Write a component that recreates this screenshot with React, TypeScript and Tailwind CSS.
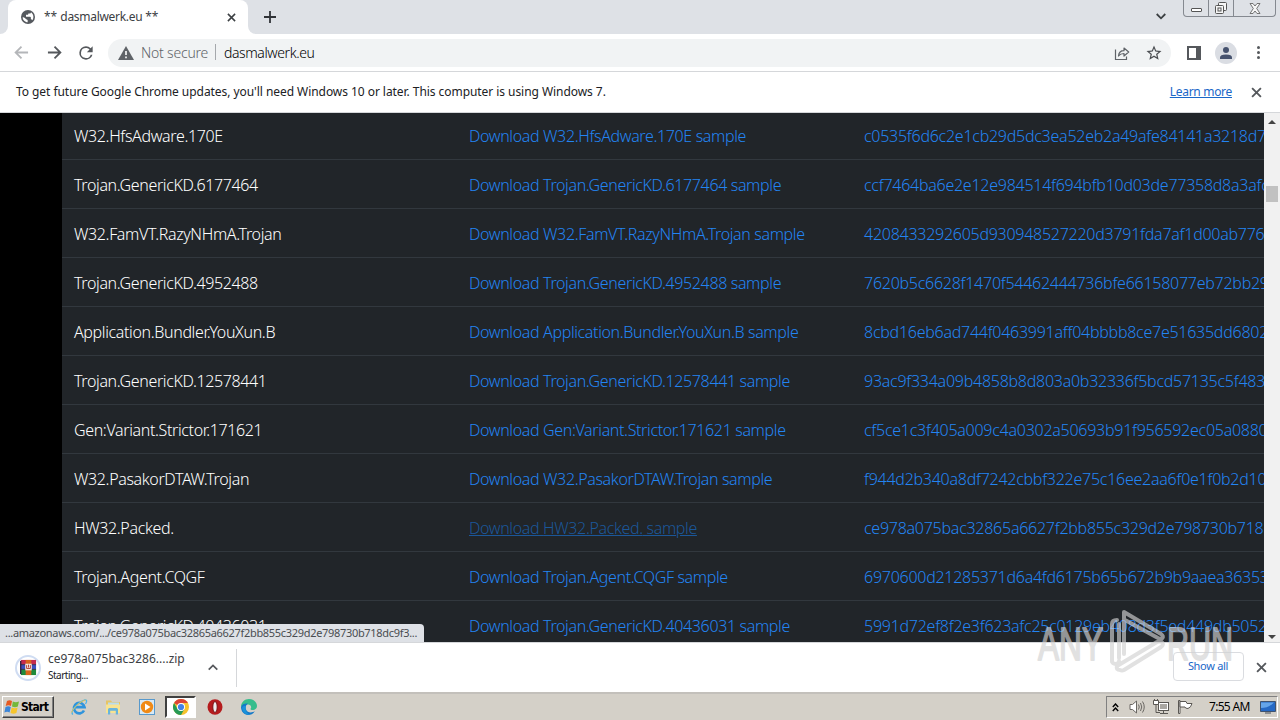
import { ReactNode } from "react";

// ============================================================
// Data
// ============================================================

interface Sample {
  name: string;
  hash: string;
  hovered?: boolean;
}

const SAMPLES: Sample[] = [
  { name: "W32.HfsAdware.170E", hash: "c0535f6d6c2e1cb29d5dc3ea52eb2a49afe84141a3218d7f" },
  { name: "Trojan.GenericKD.6177464", hash: "ccf7464ba6e2e12e984514f694bfb10d03de77358d8a3afc" },
  { name: "W32.FamVT.RazyNHmA.Trojan", hash: "4208433292605d930948527220d3791fda7af1d00ab776" },
  { name: "Trojan.GenericKD.4952488", hash: "7620b5c6628f1470f54462444736bfe66158077eb72bb29" },
  { name: "Application.Bundler.YouXun.B", hash: "8cbd16eb6ad744f0463991aff04bbbb8ce7e51635dd6802" },
  { name: "Trojan.GenericKD.12578441", hash: "93ac9f334a09b4858b8d803a0b32336f5bcd57135c5f483" },
  { name: "Gen:Variant.Strictor.171621", hash: "cf5ce1c3f405a009c4a0302a50693b91f956592ec05a0880" },
  { name: "W32.PasakorDTAW.Trojan", hash: "f944d2b340a8df7242cbbf322e75c16ee2aa6f0e1f0b2d10" },
  { name: "HW32.Packed.", hash: "ce978a075bac32865a6627f2bb855c329d2e798730b718", hovered: true },
  { name: "Trojan.Agent.CQGF", hash: "6970600d21285371d6a4fd6175b65b672b9b9aaea36353" },
  { name: "Trojan.GenericKD.40436031", hash: "5991d72ef8f2e3f623afc25c0129eb408d3f5ed449db5052a" },
];

// ============================================================
// Icons
// ============================================================

function CloseIcon({ className = "" }: { className?: string }) {
  return (
    <svg className={className} viewBox="0 0 10 10" fill="none" stroke="currentColor" strokeWidth={1.7}>
      <path d="M1 1l8 8M9 1L1 9" />
    </svg>
  );
}

function GlobeIcon() {
  return (
    <svg className="h-4 w-4" viewBox="0 0 24 24">
      <circle cx="12" cy="12" r="10.5" fill="#55595e" />
      <path d="M4 12.500c1 0 3 .5 4.500 2 1 1 2.500 1 3 2.200V20C7.500 20 4 16.500 4 12.500zM9 11.500V8.800h2.200c1 0 1.300-1 1.300-2h2c1.200 0 2-.8 2-1.900 2.200 1.500 3.600 4.100 3.600 7.100 0 1.800-.6 3.500-1.500 4.800-.6-.8-1.300-1.300-2.300-1.300v-2.700c0-.8-.6-1.300-1.300-1.300z" fill="#fff" />
    </svg>
  );
}

function ArrowIcon({ className = "" }: { className?: string }) {
  return (
    <svg className={className} viewBox="0 0 16 16" fill="none" stroke="currentColor" strokeWidth={1.9}>
      <path d="M1 8h13M8 1.700L14.300 8 8 14.300" />
    </svg>
  );
}

function ReloadIcon() {
  return (
    <svg className="h-5 w-5" viewBox="0 0 24 24" fill="#55585c">
      <path d="M17.650 6.350A7.960 7.960 0 0 0 12 4a8 8 0 1 0 7.730 10h-2.080A6 6 0 1 1 12 6c1.660 0 3.140.690 4.220 1.780L13 11h7V4l-2.350 2.350z" />
    </svg>
  );
}

function ShareIcon() {
  return (
    <svg className="h-4 w-4" viewBox="0 0 16 16" fill="none" stroke="#5f6368" strokeWidth={1.2}>
      <path d="M1.500 4.500v10h11v-3" />
      <path d="M4.500 11c.3-3.500 2.400-5.300 5.500-5.300V3l4.700 4L10 11V8.500C7.500 8.500 5.800 9.300 4.500 11z" strokeLinejoin="round" />
    </svg>
  );
}

function StarIcon() {
  return (
    <svg className="h-[18px] w-[18px]" viewBox="0 0 24 24" fill="#4a4d51">
      <path d="M22 9.240l-7.190-.620L12 2 9.190 8.630 2 9.240l5.460 4.730L5.820 21 12 17.270 18.180 21l-1.630-7.030L22 9.240zM12 15.400l-3.760 2.270 1-4.280-3.320-2.880 4.380-.380L12 6.100l1.710 4.040 4.380.380-3.320 2.880 1 4.280L12 15.400z" />
    </svg>
  );
}

function WinRarIcon() {
  return (
    <svg className="h-[17px] w-[17px] shrink-0" viewBox="0 0 18 18">
      <rect x="1" y="1" width="16" height="5" fill="#c42a4e" />
      <rect x="1" y="6" width="16" height="5" fill="#3b4fc0" />
      <rect x="1" y="11" width="16" height="6" fill="#1f8a3c" />
      <rect x="0" y="2" width="1.500" height="14" fill="#392447" />
      <rect x="6" y="1" width="6" height="16" fill="#d8641c" />
      <rect x="5.500" y="5" width="7" height="7" fill="#f3e6e0" />
      <path d="M7 6.500v3.500h4V6.500M9 6v3" stroke="#b03a30" fill="none" />
      <path d="M1 6h4.500M12.500 6H17M1 11h4.500M12.500 11H17" stroke="#221b32" strokeWidth={0.800} />
    </svg>
  );
}

function WindowsLogo() {
  return (
    <svg className="h-4 w-[18px] shrink-0" viewBox="0 0 16 16">
      <path d="M3 2c2-1.300 3.500-1 5 0L7 7c-1.700-.9-3.200-1-5.300 0z" fill="#e65a22" />
      <path d="M8.800 2.500c2 1 3.700 1 6.200 0L13.800 7.500c-2 1-3.800.9-5.800-.1z" fill="#74b83b" />
      <path d="M1.500 8c2-1 3.600-.9 5.300 0l-1.200 5.500c-1.700-1-3.200-1-5.200 0z" fill="#3c86d8" />
      <path d="M7.700 8.400c2 1 3.800 1.100 5.900.1l-1.200 5.500c-2.100 1-3.900.9-5.900-.1z" fill="#f6c52c" />
    </svg>
  );
}

function IeIcon() {
  return (
    <svg className="h-[18px] w-[18px]" viewBox="0 0 18 18" fill="none">
      <path d="M14 12.500a5.300 5.300 0 1 1 .5-3.300H5" stroke="#2f94dc" strokeWidth={2.700} />
      <path d="M3 16.500C-1 14.500 8 4 14.500 2c2.800-.6 2.500 1.500 1 4" stroke="#4bb3e8" strokeWidth={1.300} />
      <path d="M1.500 14.500C4 9 10 3.500 15.500 2" stroke="#e9c64d" strokeWidth={1} />
    </svg>
  );
}

function ExplorerIcon() {
  return (
    <svg className="h-[18px] w-[18px]" viewBox="0 0 18 18">
      <path d="M2 2.500h5l1 1.500h8V15H2z" fill="#e6c465" />
      <path d="M4 4.500h11v7H4z" fill="#b9dcec" />
      <path d="M2 6.500h14V15H2z" fill="#f8e391" />
      <path d="M4 16.500v-5q0-1.500 1.500-1.500h7q1.500 0 1.500 1.500v5h-2.200v-3.700H6.200v3.700z" fill="#68b4dc" />
    </svg>
  );
}

function MediaIcon() {
  return (
    <svg className="h-[18px] w-[18px]" viewBox="0 0 18 18">
      <rect x="1.500" y="1.500" width="15" height="15" fill="#d8e9f5" stroke="#5899cc" />
      <circle cx="9" cy="9" r="6.200" fill="#f08a16" />
      <path d="M7 5.500v7L12.500 9z" fill="#fff" />
    </svg>
  );
}

function ChromeIcon() {
  return (
    <svg className="h-4 w-4" viewBox="0 0 16 16">
      <circle cx="8" cy="8" r="8" fill="#f6c22d" />
      <path d="M8 8L1.070 4A8 8 0 0 1 14.930 4H8z" fill="#dc4437" />
      <path d="M1.070 4A8 8 0 0 0 8 16l3.460-6H8L4.540 10z" fill="#279a55" />
      <circle cx="8" cy="8" r="4" fill="#fff" />
      <circle cx="8" cy="8" r="3.100" fill="#4282e8" />
    </svg>
  );
}

function OperaIcon() {
  return (
    <svg className="h-4 w-4" viewBox="0 0 16 16">
      <ellipse cx="8" cy="8" rx="7.500" ry="7.800" fill="#b51c1e" />
      <ellipse cx="8" cy="8" rx="2.200" ry="5.500" fill="#eee" stroke="#771013" />
    </svg>
  );
}

function EdgeIcon() {
  return (
    <svg className="h-4 w-4" viewBox="0 0 16 16">
      <path d="M0 8C0 3.500 3.500 0 8 0c5 0 8 3.500 8 7 0 2.800-2.300 4-4.500 4-1.800 0-2.500-.8-1.500-2 .6-2-1-3.500-3-3.500C4 5.500 1 7 0 8z" fill="#36bd8d" />
      <path d="M0 8c1-3 4-4 7-3.500-2 1.300-3 3.500-2 6 1.200 3 5.500 4 9 1.500-2 3-4.300 4-7 4-4 0-7-3.800-7-8z" fill="#1478c9" />
      <path d="M5 7c-1 3 0 7 4 8.800C4 16 .7 12 1.200 8.500 2 7 3.500 6.700 5 7z" fill="#1a93da" />
    </svg>
  );
}

function SpeakerIcon() {
  return (
    <svg className="h-4 w-4" viewBox="0 0 16 16" fill="none" stroke="#6a6763">
      <path d="M1 5.500h2.500L7.500 2v12l-4-3.500H1z" fill="#fff" />
      <path d="M9.500 5.500q1.500 2.500 0 5M11.500 4q2.500 4 0 8M13.500 2.500q3.500 5.500 0 11" />
    </svg>
  );
}

function NetworkIcon() {
  return (
    <svg className="h-4 w-4" viewBox="0 0 16 16" fill="none" stroke="#5a5753">
      <rect x="5.500" y="3.500" width="10" height="8" fill="#fff" />
      <rect x="7" y="5" width="7" height="5" fill="#aaa7a2" stroke="none" />
      <path d="M7 14.500h8M10.500 12v2" />
      <path d="M.5 1.500v4h5v-4zM1.500 0v2M4.500 0v2" fill="#fff" />
      <path d="M3 5.500v8h4" />
    </svg>
  );
}

function FlagIcon() {
  return (
    <svg className="h-4 w-4" viewBox="0 0 16 16" fill="#fff" stroke="#5a5753">
      <path d="M1.500 1.500h1.500v13H1.500z" />
      <path d="M3 2.500h6l1 2h5q-1 4-4 5-3 0-3-1.500H3z" />
    </svg>
  );
}

function DesktopIcon() {
  return (
    <svg className="h-4 w-4" viewBox="0 0 16 16">
      <path d="M.5 2.500h15v10H.5z" fill="#2669c4" stroke="#40536e" />
      <path d="M1 9Q8 9 14 3.500H1z" fill="#65a5e9" />
      <path d="M5 14h6" stroke="#48505c" />
    </svg>
  );
}

// ============================================================
// Browser chrome
// ============================================================

function TabStrip() {
  return (
    <div className="flex h-[34px] shrink-0 bg-[#dee1e6]">
      <div className="w-2 bg-white">
        <div className="h-full rounded-br-lg bg-[#dee1e6]" />
      </div>
      <div className="flex w-[240px] items-center rounded-t-lg bg-white pr-3 pl-3">
        <GlobeIcon />
        <span className="ml-2 flex-1 text-[12px] tracking-[-0.9px] whitespace-nowrap text-[#3c4043]">
          <span className="tracking-normal">** </span>
          <span className="tracking-[-0.3px]">dasmalwerk.eu</span>
          <span className="tracking-[-0.2px]"> **</span>
        </span>
        <CloseIcon className="h-[9px] w-[9px] text-[#3c4043]" />
      </div>
      <div className="w-2 bg-white">
        <div className="h-full rounded-bl-lg bg-[#dee1e6]" />
      </div>
      <svg className="mt-[11px] ml-2 h-3 w-3" viewBox="0 0 12 12" stroke="#303338" strokeWidth={1.800}>
        <path d="M6 0v12M0 6h12" />
      </svg>
      <svg className="mt-3 ml-auto h-[9px] w-[10px]" viewBox="0 0 10 9" fill="none" stroke="#3c4043" strokeWidth={1.800}>
        <path d="M.7 2L5 6.300 9.300 2" />
      </svg>
      <div className="mr-1 ml-[17px] flex h-[17px] w-[93px] rounded-b border border-t-0 border-[#858990]">
        <div className="flex w-[25px] items-end justify-center border-r border-[#858990] pb-1">
          <div className="h-[4px] w-[11px] rounded-[1px] border border-[#555] bg-white" />
        </div>
        <div className="flex w-[25px] items-center justify-center border-r border-[#858990]">
          <svg className="h-3 w-3" viewBox="0 0 12 12" fill="#f6f6f6" stroke="#555">
            <rect x="3.500" y=".5" width="8" height="8" rx="1" />
            <rect x=".5" y="3.500" width="8" height="8" rx="1" />
            <rect x="3" y="6" width="3" height="3" />
          </svg>
        </div>
        <div className="flex flex-1 items-center justify-center">
          <svg className="h-[11px] w-3" viewBox="0 0 12 11" fill="#f6f6f6" stroke="#666" strokeWidth={0.900}>
            <path d="M1 .5h3l2 2.500L8 .5h3L7.700 5.500 11 10.500H8L6 8l-2 2.500H1L4.300 5.500z" />
          </svg>
        </div>
      </div>
    </div>
  );
}

function Toolbar() {
  return (
    <div className="flex h-[38px] shrink-0 items-center border-b border-[#d5d7da] bg-white pl-[14px]">
      <ArrowIcon className="h-[15px] w-[15px] rotate-180 text-[#b4b6b9]" />
      <ArrowIcon className="ml-[18px] h-[15px] w-[15px] text-[#55585c]" />
      <div className="ml-[14px]">
        <ReloadIcon />
      </div>
      <div className="ml-3 flex h-7 w-[1063px] items-center rounded-full bg-[#f1f3f4] pl-[10px] text-[14px] font-light">
        <svg className="h-[14px] w-4" viewBox="0 0 16 14">
          <path d="M8 0l8 14H0z" fill="#5f6368" />
          <path d="M8 5v4M8 10.500v1.700" stroke="#fff" strokeWidth={1.600} />
        </svg>
        <span className="ml-[7px] w-[66px] tracking-[-0.2px] whitespace-nowrap text-[#5f6368]">Not secure</span>
        <div className="mx-2 -mt-px h-4 w-px bg-[#a5a8ac]" />
        <span className="tracking-[-0.4px] text-[#000]">dasmalwerk.eu</span>
        <div className="mr-2 ml-auto flex items-center gap-[15px]">
          <ShareIcon />
          <StarIcon />
        </div>
      </div>
      <svg className="ml-4 h-[14px] w-[14px]" viewBox="0 0 14 14">
        <path d="M1 1h12v12H1z" fill="none" stroke="#55585c" strokeWidth={2} />
        <path d="M9 1h5v12H9z" fill="#55585c" />
      </svg>
      <div className="ml-[14px] flex h-[22px] w-[22px] items-center justify-center rounded-full bg-[#dadde3]">
        <svg className="h-3 w-3" viewBox="0 0 12 12" fill="#46526e">
          <circle cx="6" cy="3" r="3" />
          <path d="M0 12v-1.500Q0 7.500 6 7.500t6 3V12z" />
        </svg>
      </div>
      <div className="ml-[20px] flex flex-col gap-[2px]">
        <div className="h-[3px] w-[3px] rounded-full bg-[#55585c]" />
        <div className="h-[3px] w-[3px] rounded-full bg-[#55585c]" />
        <div className="h-[3px] w-[3px] rounded-full bg-[#55585c]" />
      </div>
    </div>
  );
}

function InfoBar() {
  return (
    <div className="flex h-[41px] shrink-0 items-center border-b border-[#d5d7da] bg-white pr-[18px] pl-4 text-[12px]">
      <span className="tracking-[-0.055px] whitespace-nowrap text-[#202124]">
        To get future Google Chrome updates, you'll need Windows 10 or later. This computer is using Windows 7.
      </span>
      <a className="mr-[19px] ml-auto tracking-[-0.3px] whitespace-nowrap text-[#1a67c8] underline">Learn more</a>
      <CloseIcon className="h-[11px] w-[11px] text-[#55585c]" />
    </div>
  );
}

// ============================================================
// Page
// ============================================================

function SampleRow({ sample }: { sample: Sample }) {
  return (
    <div className="flex h-[49px] shrink-0 items-center border-b border-[#32383e] pt-[2px] pl-3 text-[16px] font-light tracking-[-0.36px] whitespace-nowrap">
      <div className="w-[395px] shrink-0 text-white">{sample.name}</div>
      <div className="w-[395px] shrink-0">
        <a className={sample.hovered ? "text-[#1b5799] underline" : "text-[#2384f2]"}>Download {sample.name} sample</a>
      </div>
      <div className="tracking-[-0.26px] text-[#2384f2]">{sample.hash}</div>
    </div>
  );
}

function Scrollbar() {
  return (
    <div className="flex w-4 shrink-0 flex-col items-center bg-[#f1f1f1]">
      <svg className="mt-[7px] h-1 w-2" viewBox="0 0 8 4">
        <path d="M0 4l4-4 4 4z" fill="#444" />
      </svg>
      <div className="mt-[62px] h-4 w-3 bg-[#c1c1c1]" />
      <svg className="mt-auto mb-[3px] h-1 w-2" viewBox="0 0 8 4">
        <path d="M0 0l4 4 4-4z" fill="#444" />
      </svg>
    </div>
  );
}

function Watermark() {
  return (
    <div className="absolute top-[608px] left-[1036px] h-[66px] w-[200px] opacity-65">
      <svg className="h-full w-full" viewBox="0 0 200 66" fill="none" stroke="#d2d2d2" strokeWidth={4} strokeLinejoin="round" strokeLinecap="round">
        <path d="M76 53V16q0-4 5-4M83 50V16" />
        <path d="M88 46V4l37 22c4 3 1 6-3 4L89 12" />
        <path d="M76 53c0 4 7 4 7 0M84 62q-4 0-3-4l40-24c5-2 8 2 4 5L88 62q-2 1-4 0" />
        <g fill="#d2d2d2" strokeWidth={1.800} fontFamily="Liberation Sans, sans-serif" fontSize="46">
          <text x="2" y="52" textLength="65" lengthAdjust="spacingAndGlyphs">ANY</text>
          <text x="131" y="52" textLength="66" lengthAdjust="spacingAndGlyphs">RUN</text>
        </g>
      </svg>
    </div>
  );
}

function DownloadShelf() {
  return (
    <div className="flex h-[50px] shrink-0 items-center border-t border-[#d5d7da] bg-white">
      <div className="ml-[15px] flex h-[26px] w-[26px] items-center justify-center rounded-full border-2 border-[#cfdcf2]">
        <WinRarIcon />
      </div>
      <div className="mb-[2px] ml-[7px] w-[160px] leading-[17px] whitespace-nowrap">
        <div className="text-[12px] text-[#3c4043]">ce978a075bac3286....zip</div>
        <div className="text-[10px] tracking-[-0.5px] text-[#202124]">Starting...</div>
      </div>
      <svg className="h-[7px] w-[10px]" viewBox="0 0 10 7" fill="none" stroke="#55585c" strokeWidth={1.700}>
        <path d="M.7 5.700L5 1.400l4.300 4.300" />
      </svg>
      <div className="ml-[18px] h-[38px] w-px bg-[#d5d7da]" />
      <div className="mr-3 mb-[2px] ml-auto flex h-[29px] w-[71px] items-center justify-center rounded border border-[#dadce0] pr-px text-[11px] tracking-[-0.3px] text-[#1a67c8]">
        Show all
      </div>
      <CloseIcon className="mr-[13px] h-[11px] w-[11px] text-[#55585c]" />
    </div>
  );
}

function TaskButton({ children, active }: { children: ReactNode; active?: boolean }) {
  return (
    <div
      className={`flex h-[22px] w-[31px] items-center justify-center ${
        active ? "border-2 border-t-[#404040] border-r-white border-b-white border-l-[#404040] bg-white" : ""
      }`}
    >
      {children}
    </div>
  );
}

function Taskbar() {
  return (
    <div className="flex h-7 shrink-0 items-center border-t-2 border-t-[#c3c0bb] bg-[#d4d0c8] pr-[2px] pl-[2px] text-[12px]">
      <div className="flex h-[22px] w-[52px] items-center border border-t-white border-r-[#404040] border-b-[#404040] border-l-white text-[12px] font-bold text-black shadow-[inset_-1px_-1px_0_#808080]">
        <WindowsLogo />
        <span className="font-['DejaVu_Sans_Condensed','DejaVu_Sans',sans-serif] text-[12px] tracking-[-0.7px]">Start</span>
      </div>
      <div className="ml-[9px] flex gap-[3px]">
        <TaskButton><IeIcon /></TaskButton>
        <TaskButton><ExplorerIcon /></TaskButton>
        <TaskButton><MediaIcon /></TaskButton>
        <TaskButton active><ChromeIcon /></TaskButton>
        <TaskButton><OperaIcon /></TaskButton>
        <TaskButton><EdgeIcon /></TaskButton>
      </div>
      <div className="ml-auto flex h-[22px] w-[172px] items-center border border-t-[#808080] border-r-white border-b-white border-l-[#808080] pl-[5px]">
        <svg className="h-[9px] w-[7px]" viewBox="0 0 7 9" fill="none" stroke="#000" strokeWidth={1.400}>
          <path d="M.8 4l2.700-3 2.700 3M.8 8l2.700-3 2.700 3" />
        </svg>
        <div className="ml-[10px] flex gap-2">
          <SpeakerIcon />
          <NetworkIcon />
          <FlagIcon />
        </div>
        <span className="ml-4 w-[51px] tracking-[-0.7px] whitespace-nowrap text-black">7:55 AM</span>
        <DesktopIcon />
      </div>
    </div>
  );
}

export default function App() {
  return (
    <div className="relative flex h-[720px] w-[1280px] flex-col overflow-hidden bg-white font-['Noto_Sans',sans-serif]">
      <TabStrip />
      <Toolbar />
      <InfoBar />
      <div className="flex min-h-0 flex-1 bg-black">
        <div className="ml-[62px] flex min-w-0 flex-1 flex-col overflow-hidden bg-[#212529]">
          <div className="-mt-[2px] flex flex-col">
            {SAMPLES.map((sample) => (
              <SampleRow key={sample.name} sample={sample} />
            ))}
          </div>
        </div>
        <Scrollbar />
      </div>
      <DownloadShelf />
      <Taskbar />
      {/* Link target bubble over the page's lower left corner */}
      <div className="absolute top-[624px] left-0 flex h-[18px] w-[424px] items-center rounded-tr bg-[#dee1e6] pl-[5px] text-[11px] tracking-[-0.31px] whitespace-nowrap text-[#4a4d51]">
        ...amazonaws.com/.../ce978a075bac32865a6627f2bb855c329d2e798730b718dc9f3...
      </div>
      <Watermark />
    </div>
  );
}
